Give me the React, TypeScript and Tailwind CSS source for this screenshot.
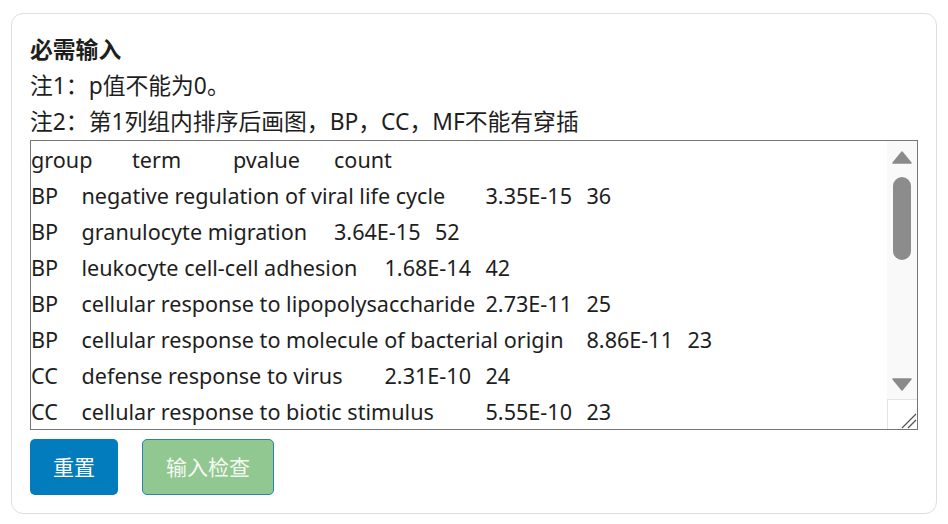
import React from "react";

type Seg = [number, string];

const rows: Seg[][] = [
  [[0, "group"], [2, "term"], [4, "pvalue"], [6, "count"]],
  [[0, "BP"], [1, "negative regulation of viral life cycle"], [9, "3.35E-15"], [11, "36"]],
  [[0, "BP"], [1, "granulocyte migration"], [6, "3.64E-15"], [8, "52"]],
  [[0, "BP"], [1, "leukocyte cell-cell adhesion"], [7, "1.68E-14"], [9, "42"]],
  [[0, "BP"], [1, "cellular response to lipopolysaccharide"], [9, "2.73E-11"], [11, "25"]],
  [[0, "BP"], [1, "cellular response to molecule of bacterial origin"], [11, "8.86E-11"], [13, "23"]],
  [[0, "CC"], [1, "defense response to virus"], [7, "2.31E-10"], [9, "24"]],
  [[0, "CC"], [1, "cellular response to biotic stimulus"], [9, "5.55E-10"], [11, "23"]],
];

const TAB = 50.5;

const font = { fontFamily: '"Noto Sans", "Noto Sans CJK SC", sans-serif' };

function Row({ segs }: { segs: Seg[] }) {
  return (
    <div className="flex h-[36px] items-center whitespace-pre">
      {segs.map(([stop, text], i) => {
        const next = i + 1 < segs.length ? segs[i + 1][0] : null;
        return (
          <span
            key={i}
            className="shrink-0"
            style={next !== null ? { width: (next - stop) * TAB } : undefined}
          >
            {text}
          </span>
        );
      })}
    </div>
  );
}

function Scrollbar() {
  return (
    <div className="flex w-[30px] shrink-0 flex-col bg-[#f9f9f9]">
      <div className="flex h-[258px] flex-col items-center">
        <svg width="20" height="13" viewBox="0 0 20 13" className="mt-[10px]">
          <path d="M10 1 L19 12 L1 12 Z" fill="#8a8a8a" stroke="#8a8a8a" strokeWidth="1.5" strokeLinejoin="round" />
        </svg>
        <div className="mt-[13px] h-[83px] w-[18px] rounded-full bg-[#8c8c8c]" />
        <div className="flex-1" />
        <svg width="20" height="13" viewBox="0 0 20 13" className="mb-[8px]">
          <path d="M1 1 L19 1 L10 12 Z" fill="#8a8a8a" stroke="#8a8a8a" strokeWidth="1.5" strokeLinejoin="round" />
        </svg>
      </div>
      <div className="relative h-[30px] border-l border-t border-[#e3e3e3] bg-white">
        <svg width="30" height="30" viewBox="0 0 30 30" className="absolute left-0 top-0">
          <path d="M14 28 L28 14" stroke="#555" strokeWidth="1.2" />
          <path d="M20 28 L28 20" stroke="#555" strokeWidth="1.2" />
        </svg>
      </div>
    </div>
  );
}

export default function App() {
  return (
    <div className="h-[524px] w-[948px] bg-white pl-[11px] pt-[13px] text-[#1e1e1e]" style={font}>
      <div className="w-[926px] rounded-[12px] border border-[#dedede] px-[18px] pb-[18px] pt-[18px]">
        <div className="text-[22.8px] font-bold leading-[36px]">必需输入</div>
        <div className="text-[22.8px] leading-[36px]">注1：p值不能为0。</div>
        <div className="text-[22.8px] leading-[36px]">注2：第1列组内排序后画图，BP，CC，MF不能有穿插</div>
        <div className="flex h-[290px] w-[888px] border border-[#767676] bg-white">
          <div className="flex-1 overflow-hidden pt-[1px] text-[21.6px]">
            {rows.map((r, i) => (
              <Row key={i} segs={r} />
            ))}
          </div>
          <Scrollbar />
        </div>
        <div className="mt-[9px] flex gap-[24px]">
          <button className="h-[56px] w-[88px] rounded-[5px] bg-[#037cbd] text-[21px] leading-none text-white">重置</button>
          <button className="h-[56px] w-[132px] rounded-[5px] border border-[#2a82b4] bg-[#91c790] text-[21px] leading-none text-[#f5f9f2]">输入检查</button>
        </div>
      </div>
    </div>
  );
}
